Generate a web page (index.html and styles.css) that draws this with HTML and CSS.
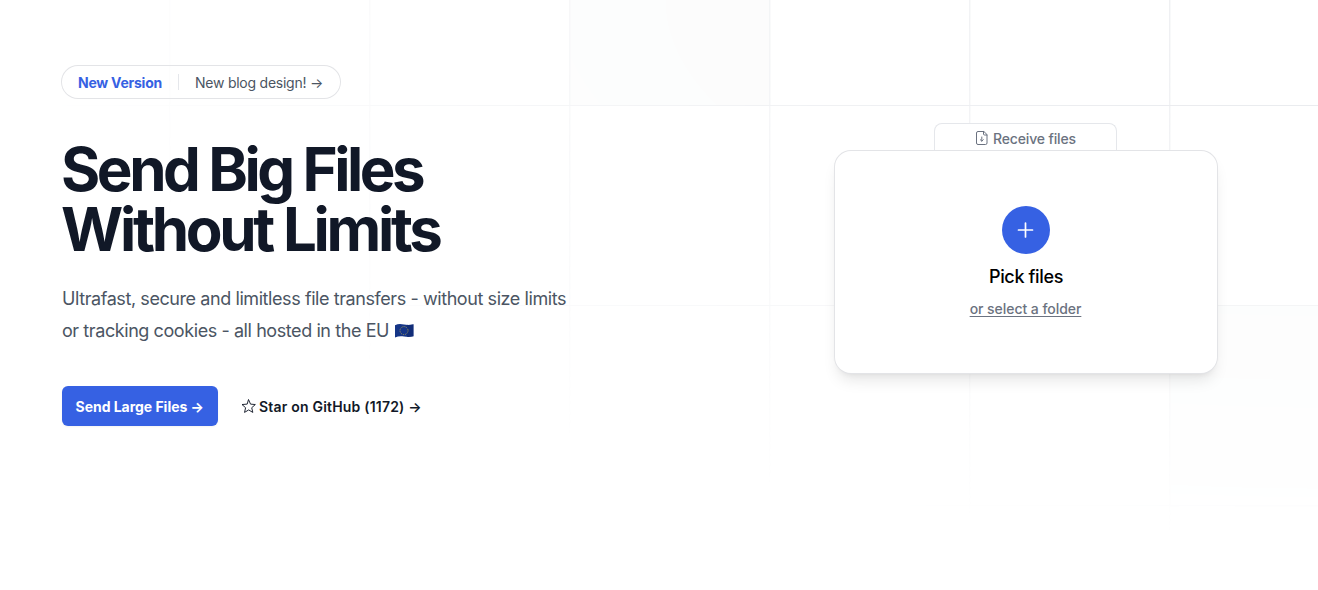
FILE: index.html
```html
<!DOCTYPE html>
<html lang="en">
<head>
<meta charset="utf-8">
<title>Send Big Files Without Limits</title>
<link rel="stylesheet" href="styles.css">
</head>
<body>
<main class="hero">
  <svg class="grid-bg" width="1318" height="590" aria-hidden="true">
    <defs>
      <pattern id="grid" width="200" height="200" x="169" y="105" patternUnits="userSpaceOnUse">
        <path d="M.8 200V0" fill="none" stroke="#e5e7eb"/>
        <path d="M0 .5H200" fill="none" stroke="#e5e7eb"/>
      </pattern>
    </defs>
    <path class="cells" d="M569.500 -95h201v201h-201ZM1169.500 305.500h201v201h-201Z"/>
    <rect width="100%" height="100%" fill="url(#grid)"/>
  </svg>
  <section class="intro">
    <a class="badge">
      <span class="badge-label">New Version</span>
      <span class="badge-rule"></span>
      <span class="badge-text">New blog design! →</span>
    </a>
    <h1 class="title">Send Big Files<br><span class="title-end">Without Limits</span></h1>
    <p class="lead">Ultrafast, secure and limitless file transfers - without size limits<br>or tracking cookies - all hosted in the EU
      <svg class="flag" width="20" height="16" viewBox="0 0 20 16" role="img" aria-label="EU flag">
        <path d="M1 2.200C4 .6 7 .8 10 1.500s6 .6 9.500-.2v12c-3.500 1-6.500.8-9.500.3s-6-.4-9 1Z" fill="#153587"/>
        <path d="M13 1.800c2 .2 4 0 6.500-.5v12c-2.500.7-4.500.8-6.500.6Z" fill="#0d2466" opacity=".45"/>
        <circle cx="10" cy="7.600" r="4" fill="none" stroke="#a99f55" stroke-width="1" stroke-dasharray="1 1.094"/>
      </svg>
    </p>
    <div class="actions">
      <a class="button">Send Large Files →</a>
      <a class="star-link">
        <svg class="star" width="16" height="16" viewBox="0 0 24 24" fill="none" stroke="currentColor" stroke-width="1.400" stroke-linecap="round" stroke-linejoin="round"><path d="M11.500 2.800 14.300 9.200l7.200.6-5.400 4.800 1.600 7-6.200-3.700-6.200 3.700 1.600-7L1.500 9.800l7.200-.6Z"/></svg>
        <span>Star on GitHub (1172) →</span>
      </a>
    </div>
  </section>
  <section class="uploader">
    <a class="tab">
      <svg class="doc" width="16" height="16" viewBox="0 0 16 16" fill="none" stroke="currentColor" stroke-width="1" stroke-linecap="round" stroke-linejoin="round"><path d="M9.500 1.500H4a1.500 1.500 0 0 0-1.500 1.500v10A1.500 1.500 0 0 0 4 14.500h7.500a1.500 1.500 0 0 0 1.500-1.500V5ZM9.500 1.500V4a1 1 0 0 0 1 1H13M7.800 7v4M6.300 9.700 7.800 11.200l1.500-1.500"/></svg>
      <span>Receive files</span>
    </a>
    <div class="card">
      <button class="add" aria-label="Pick files">
        <svg width="24" height="24" viewBox="0 0 24 24" fill="none" stroke="currentColor" stroke-width="1.700" stroke-linecap="round"><path d="M11.500 5v14M4.500 12h14"/></svg>
      </button>
      <div class="pick">Pick files</div>
      <a class="folder">or select a folder</a>
    </div>
  </section>
</main>
</body>
</html>
```
FILE: styles.css
```css
* { box-sizing: border-box; }

body {
  margin: 0;
  background: #fff;
  color: #111827;
  font-family: Inter, "Liberation Sans", sans-serif;
}

.hero {
  position: relative;
  display: flex;
  justify-content: space-between;
  align-items: flex-start;
  height: 590px;
  padding: 66px 101px 0 62px;
  overflow: hidden;
}

.grid-bg {
  position: absolute;
  inset: 0;
  -webkit-mask-image: radial-gradient(99% 92% at top right, #fff, transparent);
  mask-image: radial-gradient(99% 92% at top right, #fff, transparent);
}
.cells { fill: #f9fafa; }

.intro, .uploader { position: relative; }

.badge {
  display: inline-flex;
  align-items: center;
  width: 278px;
  height: 32px;
  padding: 2px 0 0 16px;
  border-radius: 16px;
  box-shadow: 0 0 0 1px #e3e4e7;
  font-size: 14px;
  line-height: 24px;
  letter-spacing: -0.24px;
  white-space: nowrap;
}
.badge-label { color: #3661e3; font-weight: 650; }
.badge-rule { width: 1px; height: 16px; margin: -2px 16px 0; background: #e5e7eb; }
.badge-text { color: #4b5563; }

.title {
  margin: 41px 0 0 -1px;
  font-size: 60px;
  font-weight: 700;
  line-height: 60px;
  letter-spacing: -3.45px;
  white-space: nowrap;
}
.title-end { letter-spacing: -3.3px; }

.lead {
  margin: 24px 0 0;
  color: #4b5563;
  font-size: 18px;
  line-height: 32px;
  letter-spacing: -0.42px;
  white-space: nowrap;
}
.flag { vertical-align: -2px; }

.actions {
  display: flex;
  align-items: center;
  gap: 23px;
  margin-top: 39px;
  font-size: 14px;
  font-weight: 600;
  white-space: nowrap;
}
.button {
  width: 156px;
  height: 40px;
  padding: 0 13.5px;
  border-radius: 6px;
  background: #3661e3;
  box-shadow: 0 1px 2px rgb(0 0 0 / 5%);
  color: #fff;
  line-height: 42px;
  font-weight: 650;
  letter-spacing: -0.03px;
}
.star-link {
  display: flex;
  align-items: center;
  gap: 2px;
  padding-top: 2px;
  line-height: 24px;
  letter-spacing: 0.2px;
}
.star { margin-top: -2px; }

.uploader {
  display: flex;
  flex-direction: column;
  align-items: center;
  padding-top: 57px;
}
.tab {
  display: flex;
  justify-content: center;
  gap: 3px;
  width: 183px;
  height: 28px;
  margin-right: 1px;
  padding: 5px 1px 0 0;
  border: 1px solid #e5e7eb;
  border-bottom: 0;
  border-radius: 8px 8px 0 0;
  background: #fff;
  color: #6b7280;
  font-size: 14px;
  font-weight: 500;
  line-height: 20px;
  letter-spacing: -0.15px;
}
.doc { margin-top: 1px; }
.card {
  display: flex;
  flex-direction: column;
  align-items: center;
  width: 382px;
  height: 222px;
  padding-top: 55px;
  border-radius: 16px;
  background: #fff;
  box-shadow: 0 0 0 1px #e3e4e7, 0 10px 15px -3px rgb(0 0 0 / 10%), 0 4px 6px -4px rgb(0 0 0 / 10%);
}
.add {
  display: flex;
  align-items: center;
  justify-content: center;
  width: 48px;
  height: 48px;
  padding: 0;
  border: 0;
  border-radius: 50%;
  background: #3661e3;
  color: #fff;
}
.pick {
  margin-top: 9px;
  color: #000;
  font-size: 18px;
  font-weight: 500;
  line-height: 28px;
  letter-spacing: -0.35px;
}
.folder {
  margin-top: 8px;
  margin-right: 1px;
  color: #6b7280;
  font-size: 14px;
  font-weight: 500;
  line-height: 20px;
  letter-spacing: -0.05px;
  text-decoration: underline;
  text-underline-offset: 2px;
}
```
